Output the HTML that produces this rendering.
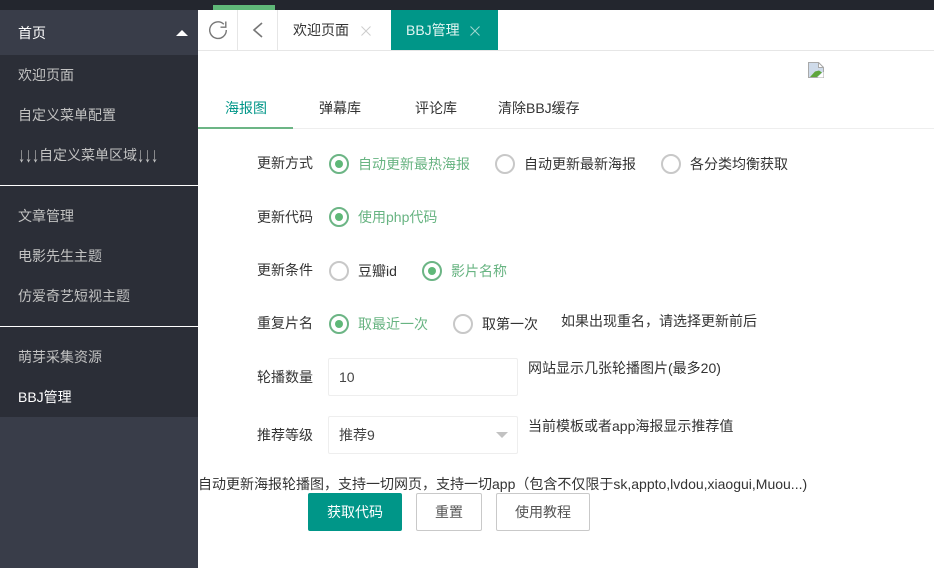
<!DOCTYPE html>
<html lang="zh"><head><meta charset="utf-8"><title>BBJ管理</title>
<style>
*{box-sizing:border-box}
html,body{margin:0;padding:0;width:934px;height:568px;overflow:hidden;background:#fff}
body{position:relative;font-family:"Liberation Sans","Noto Sans CJK SC",sans-serif;font-size:14px;color:#333}
.a{position:absolute;white-space:nowrap}
.n{left:18px;height:20px;line-height:20px;color:#c2c2c2;font-size:14px}
.n i{font-style:normal;display:inline-block;transform:scale(1,1.5);transform-origin:50% 55%}
.t{height:20px;line-height:20px}
.g{color:#68b482}
.l{left:257px}
.r{position:absolute;width:20px;height:20px;border-radius:50%;border:2px solid #c8c8c8;background:#fff}
.r.on{border-color:#6cb585}
.r.on::after{content:"";position:absolute;left:4px;top:4px;width:8px;height:8px;border-radius:50%;background:#5fb878}
.box{position:absolute;left:328px;width:190px;height:38px;border:1px solid #eee;border-radius:2px;background:#fff;line-height:36px;padding-left:10px;color:#444}
.b{position:absolute;top:493px;height:38px;line-height:36px;text-align:center;border:1px solid #c9c9c9;border-radius:2px;background:#fff;color:#555}
</style></head><body>
<div class="a" style="left:0;top:0;width:934px;height:10px;background:#23262e"></div>
<div class="a" style="left:213px;top:5px;width:62px;height:5px;background:#5fb878"></div>
<div class="a" style="left:0;top:10px;width:198px;height:558px;background:#393d49"></div>
<div class="a" style="left:0;top:55px;width:198px;height:362px;background:#2b2e37"></div>
<div class="a n" style="top:23px;color:#fff">首页</div>
<div class="a" style="left:176px;top:30px;width:0;height:0;border-left:6px solid transparent;border-right:6px solid transparent;border-bottom:6px solid #fff"></div>
<div class="a n" style="top:65px">欢迎页面</div>
<div class="a n" style="top:105px">自定义菜单配置</div>
<div class="a n" style="top:145px"><i>↓↓↓</i>自定义菜单区域<i>↓↓↓</i></div>
<div class="a" style="left:0;top:185px;width:198px;height:1px;background:#fff"></div>
<div class="a n" style="top:206px">文章管理</div>
<div class="a n" style="top:246px">电影先生主题</div>
<div class="a n" style="top:286px">仿爱奇艺短视主题</div>
<div class="a" style="left:0;top:326px;width:198px;height:1px;background:#fff"></div>
<div class="a n" style="top:347px">萌芽采集资源</div>
<div class="a n" style="top:387px;color:#fff">BBJ管理</div>

<div class="a" style="left:198px;top:50px;width:736px;height:1px;background:#e6e6e6"></div>
<div class="a" style="left:237px;top:10px;width:1px;height:40px;background:#e6e6e6"></div>
<div class="a" style="left:277px;top:10px;width:1px;height:40px;background:#e6e6e6"></div>
<svg class="a" style="left:207px;top:19px" width="22" height="22" viewBox="0 0 22 22" fill="none" stroke="#777" stroke-width="1.4"><path d="M16.800 5.200A8.300 8.300 0 1 0 19.300 11"/><path d="M18.800 2.500V8.200H13.500"/></svg>
<svg class="a" style="left:250px;top:19px" width="16" height="22" viewBox="0 0 16 22" fill="none" stroke="#777" stroke-width="1.600"><path d="M12 4 4 11l8 7"/></svg>
<div class="a t" style="left:293px;top:20px;color:#333">欢迎页面</div>
<svg class="a" style="left:361px;top:26px" width="10" height="10" viewBox="0 0 10 10" stroke="#ccc" stroke-width="1"><path d="M.5 .5l9 9M9.500 .5l-9 9"/></svg>
<div class="a" style="left:391px;top:10px;width:107px;height:40px;background:#009688"></div>
<div class="a t" style="left:406px;top:20px;color:#e2f5f2">BBJ管理</div>
<svg class="a" style="left:470px;top:26px" width="10" height="10" viewBox="0 0 10 10" stroke="#9fd8d0" stroke-width="1"><path d="M.5 .5l9 9M9.500 .5l-9 9"/></svg>

<svg class="a" style="left:808px;top:62px" width="16" height="16" viewBox="0 0 16 16"><path d="M.5 .5H10.500L15.500 5.500V15.500H.5Z" fill="#cfdbea" stroke="#a9a9a9"/><path d="M2 15 7 9.500 11 8.500 14 10.500 9 15Z" fill="#5fa63c"/><path d="M10.500 .5V5.500H15.500Z" fill="#fff" stroke="#a9a9a9"/><path d="M15 10 9.500 15.500H15.500V10Z" fill="#fff"/></svg>

<div class="a" style="left:198px;top:128px;width:736px;height:1px;background:#eee"></div>
<div class="a" style="left:198px;top:127px;width:95px;height:2px;background:#6cb585"></div>
<div class="a t" style="left:225px;top:98px;color:#009688">海报图</div>
<div class="a t" style="left:319px;top:98px">弹幕库</div>
<div class="a t" style="left:415px;top:98px">评论库</div>
<div class="a t" style="left:498px;top:98px">清除BBJ缓存</div>

<div class="a t l" style="top:153px">更新方式</div>
<div class="r on" style="left:329px;top:154px"></div><div class="a t g" style="left:358px;top:154px">自动更新最热海报</div>
<div class="r" style="left:495px;top:154px"></div><div class="a t" style="left:524px;top:154px">自动更新最新海报</div>
<div class="r" style="left:661px;top:154px"></div><div class="a t" style="left:690px;top:154px">各分类均衡获取</div>

<div class="a t l" style="top:207px">更新代码</div>
<div class="r on" style="left:329px;top:207px"></div><div class="a t g" style="left:358px;top:207px">使用php代码</div>

<div class="a t l" style="top:260px">更新条件</div>
<div class="r" style="left:329px;top:261px"></div><div class="a t" style="left:358px;top:261px">豆瓣id</div>
<div class="r on" style="left:422px;top:261px"></div><div class="a t g" style="left:451px;top:261px">影片名称</div>

<div class="a t l" style="top:313px">重复片名</div>
<div class="r on" style="left:329px;top:314px"></div><div class="a t g" style="left:358px;top:314px">取最近一次</div>
<div class="r" style="left:453px;top:314px"></div><div class="a t" style="left:482px;top:314px">取第一次</div>
<div class="a t" style="left:561px;top:311px">如果出现重名，请选择更新前后</div>

<div class="a t l" style="top:367px">轮播数量</div>
<div class="box" style="top:358px">10</div>
<div class="a t" style="left:528px;top:358px">网站显示几张轮播图片(最多20)</div>

<div class="a t l" style="top:425px">推荐等级</div>
<div class="box" style="top:416px">推荐9</div>
<div class="a" style="left:496px;top:432px;width:0;height:0;border-left:6px solid transparent;border-right:6px solid transparent;border-top:6px solid #c2c2c2"></div>
<div class="a t" style="left:528px;top:416px">当前模板或者app海报显示推荐值</div>

<div class="a t" style="left:198px;top:474px">自动更新海报轮播图，支持一切网页，支持一切app（包含不仅限于sk,appto,lvdou,xiaogui,Muou...)</div>
<div class="b" style="left:308px;width:94px;background:#009688;border-color:#009688;color:#fff">获取代码</div>
<div class="b" style="left:416px;width:66px">重置</div>
<div class="b" style="left:496px;width:94px">使用教程</div>
</body></html>
